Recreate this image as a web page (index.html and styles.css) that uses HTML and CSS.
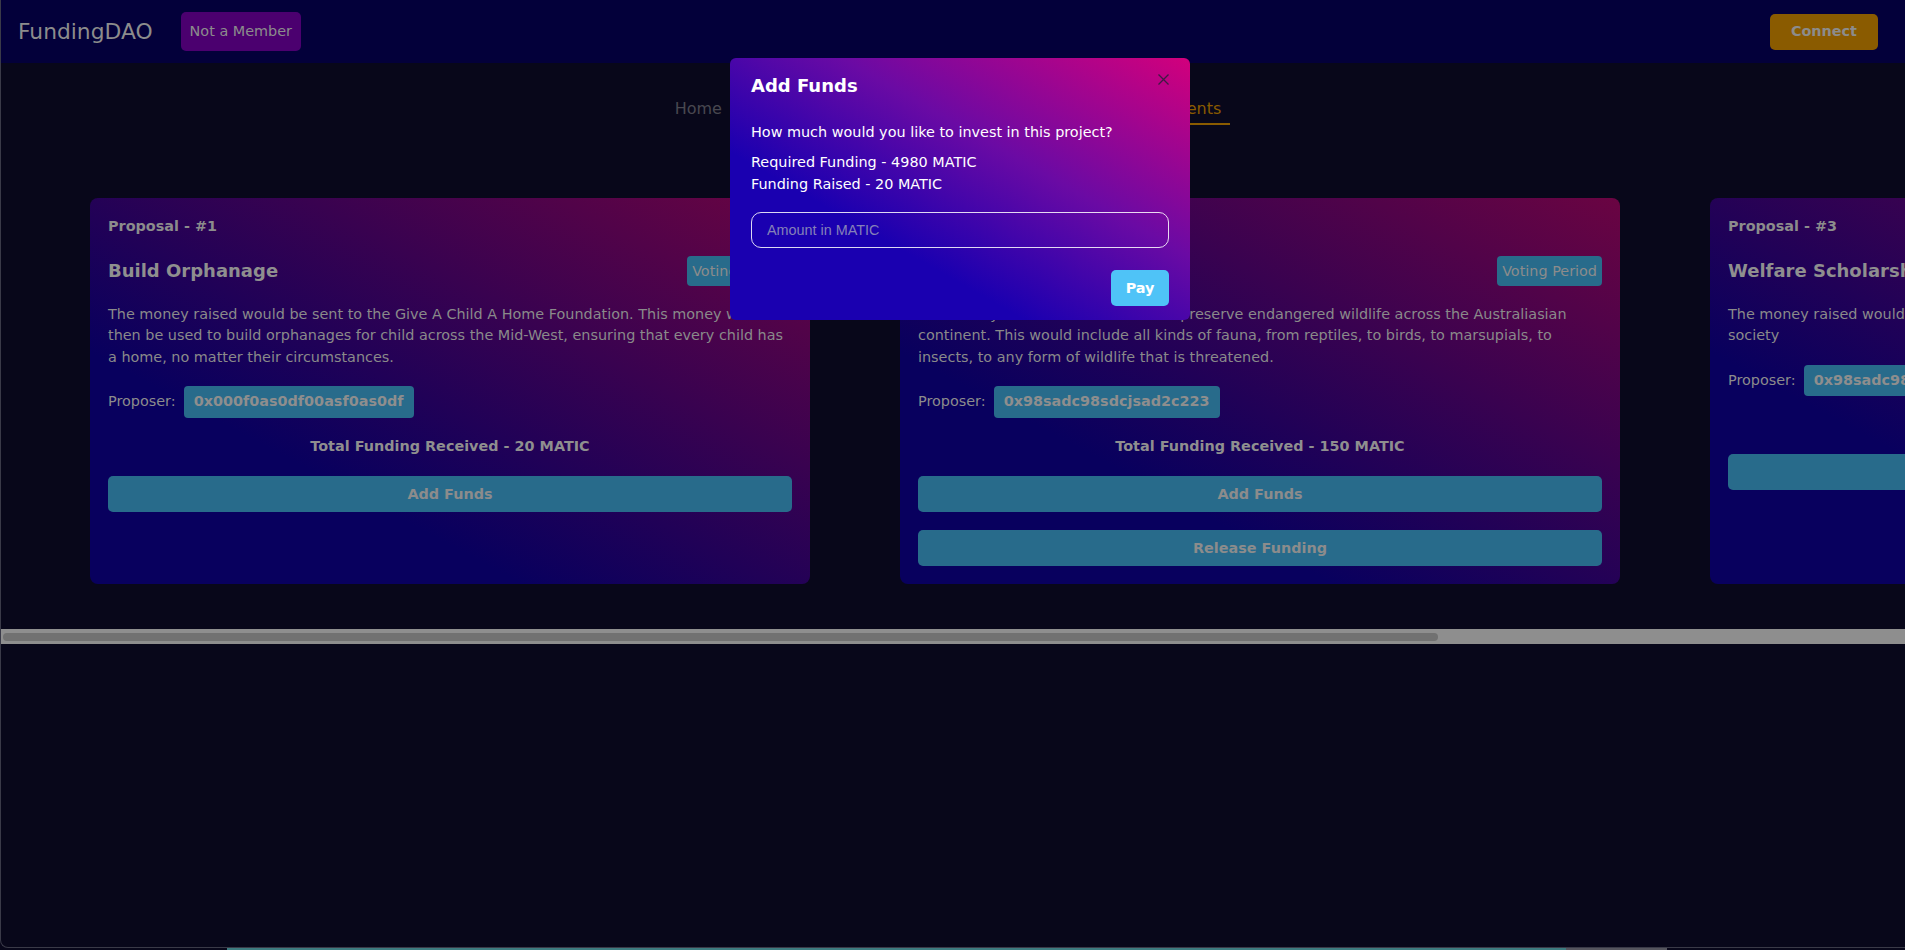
FILE: index.html
```html
<!DOCTYPE html>
<html lang="en">
<head>
<meta charset="utf-8">
<title>FundingDAO</title>
<link rel="stylesheet" href="styles.css">
</head>
<body>
<div class="frame">
  <header class="navbar">
    <div class="nav-left">
      <span class="brand">FundingDAO</span>
      <span class="member">Not a Member</span>
    </div>
    <button class="connect">Connect</button>
  </header>

  <nav class="tabs">
    <a class="tab">Home</a>
    <a class="tab">Proposals</a>
    <a class="tab">Create Proposal</a>
    <a class="tab active">Investments</a>
  </nav>

  <div class="scroller">
    <div class="track">
      <article class="card">
        <div class="card-num">Proposal - #1</div>
        <div class="card-head">
          <h2 class="card-title">Build Orphanage</h2>
          <span class="status">Voting Period</span>
        </div>
        <p class="card-desc">The money raised would be sent to the Give A Child A Home Foundation. This money would then be used to build orphanages for child across the Mid-West, ensuring that every child has a home, no matter their circumstances.</p>
        <div class="proposer"><span class="proposer-label">Proposer:</span><span class="address">0x000f0as0df00asf0as0df</span></div>
        <div class="total">Total Funding Received - 20 MATIC</div>
        <button class="action">Add Funds</button>
      </article>

      <article class="card">
        <div class="card-num">Proposal - #2</div>
        <div class="card-head">
          <h2 class="card-title">Save Wildlife</h2>
          <span class="status">Voting Period</span>
        </div>
        <p class="card-desc">The money raised would be used to preserve endangered wildlife across the Australiasian continent. This would include all kinds of fauna, from reptiles, to birds, to marsupials, to insects, to any form of wildlife that is threatened.</p>
        <div class="proposer"><span class="proposer-label">Proposer:</span><span class="address">0x98sadc98sdcjsad2c223</span></div>
        <div class="total">Total Funding Received - 150 MATIC</div>
        <button class="action">Add Funds</button>
        <button class="action">Release Funding</button>
      </article>

      <article class="card">
        <div class="card-num">Proposal - #3</div>
        <div class="card-head">
          <h2 class="card-title">Welfare Scholarships</h2>
          <span class="status">Voting Period</span>
        </div>
        <p class="card-desc">The money raised would be used to give scholarships to students from poorer sections of society</p>
        <div class="proposer"><span class="proposer-label">Proposer:</span><span class="address">0x98sadc98sdcjsad2c223</span></div>
        <div class="total">Total Funding Received - 0 MATIC</div>
        <button class="action">Add Funds</button>
      </article>
    </div>
  </div>
  <div class="hbar"><div class="hbar-thumb"></div></div>
</div>

<div class="modal">
  <div class="modal-header">
    <h3 class="modal-title">Add Funds</h3>
    <button class="close" aria-label="Close">
      <svg width="11" height="11" viewBox="0 0 11 11"><path d="M0.5 0.5 L10.5 10.5 M10.5 0.5 L0.5 10.5" stroke="#2a1f3a" stroke-width="1.3" fill="none"/></svg>
    </button>
  </div>
  <p class="modal-q">How much would you like to invest in this project?</p>
  <p class="modal-info">Required Funding - 4980 MATIC<br>Funding Raised - 20 MATIC</p>
  <input class="amount" type="text" placeholder="Amount in MATIC">
  <div class="modal-foot"><button class="pay">Pay</button></div>
</div>

<div class="bottom-strip"></div>
</body>
</html>
```
FILE: styles.css
```css
html, body {
  margin: 0;
  padding: 0;
  height: 100%;
  overflow: hidden;
  background: #08071a;
}

body {
  font-family: "DejaVu Sans", Verdana, sans-serif;
  color: #8c8c8c;
  position: relative;
}

.frame {
  box-sizing: border-box;
  height: 948px;
  border-left: 1px solid #3a3a48;
  border-bottom: 1px solid #3a3a48;
  border-bottom-left-radius: 8px;
  background: #08071a;
  overflow: hidden;
}

/* navbar */
.navbar {
  height: 63px;
  background: #03003a;
  display: flex;
  align-items: center;
  justify-content: space-between;
  padding: 0 27px 0 17px;
}

.nav-left {
  display: flex;
  align-items: center;
}

.brand {
  font-size: 21.8px;
  color: #8c8c8c;
}

.member {
  margin-left: 28px;
  background: #4b006f;
  color: #8c8c8c;
  font-size: 14.4px;
  line-height: 21px;
  padding: 9px 9px;
  border-radius: 5px;
}

.connect {
  font-family: inherit;
  font-size: 14.4px;
  font-weight: bold;
  line-height: 21px;
  color: #8c8c8c;
  background: #8a5b00;
  border: 0;
  border-radius: 5px;
  height: 36px;
  padding: 0 21px;
}

/* tabs */
.tabs {
  margin-top: 30px;
  display: flex;
  justify-content: center;
  gap: 48px;
  padding-right: 10px;
}

.tab {
  font-size: 16px;
  line-height: 19px;
  padding: 6px 9px 5px;
  border-bottom: 2px solid transparent;
  color: #484850;
}

.tab.active {
  color: #8a5b00;
  border-bottom-color: #8a5b00;
}

/* cards */
.scroller {
  margin-top: 73px;
  overflow: hidden;
}

.track {
  display: flex;
  gap: 90px;
  padding: 0 90px 45px 89px;
  width: max-content;
  align-items: stretch;
}

.hbar {
  height: 15px;
  box-sizing: border-box;
  padding: 4px 2px 3px;
  background: #8e8e8e;
}

.hbar-thumb {
  width: 1435px;
  height: 8px;
  border-radius: 4px;
  background: #717171;
}

.card {
  box-sizing: border-box;
  width: 720px;
  padding: 18px;
  border-radius: 8px;
  background: linear-gradient(to top right, #08005e 30%, #6a0442 100%);
  display: flex;
  flex-direction: column;
  gap: 18px;
  font-size: 14.4px;
  line-height: 21.6px;
}

.card-num {
  font-weight: bold;
  color: #8c8c8c;
}

.card-head {
  display: flex;
  align-items: center;
  justify-content: space-between;
}

.card-title {
  margin: 0;
  font-size: 18px;
  line-height: 27px;
  font-weight: bold;
  color: #8f8f8f;
}

.status {
  background: #286b8b;
  color: #8c8c8c;
  padding: 4px 5px;
  border-radius: 4px;
  font-size: 14.4px;
  line-height: 22px;
}

.card-desc {
  margin: 0;
  color: #8a8a8a;
}

.proposer {
  display: flex;
  align-items: center;
  gap: 8px;
}

.address {
  background: #286b8b;
  color: #8e8e8e;
  font-weight: bold;
  padding: 5px 10px;
  border-radius: 4px;
}

.total {
  text-align: center;
  font-weight: bold;
  color: #8f8f8f;
}

.action {
  font-family: inherit;
  font-size: 14.4px;
  font-weight: bold;
  color: #8c8c8c;
  background: #286b8b;
  border: 0;
  border-radius: 5px;
  height: 36px;
  width: 100%;
}

/* modal */
.modal {
  position: absolute;
  left: 730px;
  top: 58px;
  width: 460px;
  box-sizing: border-box;
  padding: 15px 21px 14px;
  border-radius: 6px;
  background: linear-gradient(to top right, #1a00b0 32%, #6a0aa4 62%, #d2007c 100%);
  color: #ffffff;
  font-size: 14.4px;
  line-height: 21.6px;
}

.modal-header {
  display: flex;
  align-items: flex-start;
  justify-content: space-between;
}

.modal-title {
  margin: 0;
  font-size: 18px;
  line-height: 26.4px;
  font-weight: bold;
}

.close {
  background: none;
  border: 0;
  padding: 0;
  margin: 1px 0 0 0;
  width: 11px;
  height: 11px;
  line-height: 0;
  opacity: 0.85;
}

.modal-q {
  margin: 23px 0 0;
}

.modal-info {
  margin: 8px 0 0;
}

.amount {
  display: block;
  box-sizing: border-box;
  width: 100%;
  height: 36px;
  margin-top: 17px;
  padding: 0 15px;
  border: 1px solid rgba(255, 255, 255, 0.85);
  border-radius: 10px;
  background: transparent;
  font-family: "Liberation Sans", Arial, sans-serif;
  font-size: 14.4px;
  color: #ffffff;
  outline: none;
}

.amount::placeholder {
  color: #8580b8;
}

.modal-foot {
  display: flex;
  justify-content: flex-end;
  margin-top: 22px;
}

.pay {
  font-family: inherit;
  font-size: 14.4px;
  font-weight: bold;
  color: #ffffff;
  background: #4fc3f7;
  border: 0;
  border-radius: 5px;
  height: 36px;
  padding: 0 14.5px;
}

.bottom-strip {
  position: absolute;
  left: 227px;
  bottom: 0;
  width: 1440px;
  height: 2px;
  background: linear-gradient(to right, #3d7b80 0%, #3d7b80 93%, #55555e 93%);
}
```
